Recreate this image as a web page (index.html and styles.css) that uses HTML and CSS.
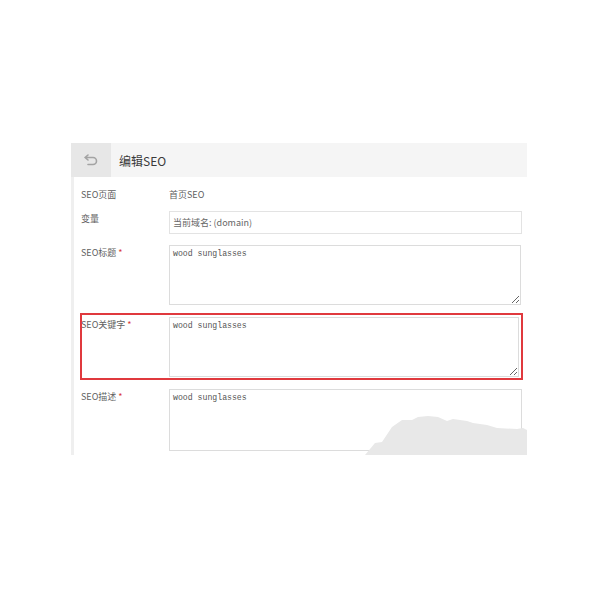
FILE: index.html
```html
<!DOCTYPE html>
<html lang="zh">
<head>
    <meta charset="UTF-8">
    <title>编辑SEO</title>
    <link rel="stylesheet" href="styles.css">
</head>
<body>
    <div class="panel">
        <div class="header">
            <div class="back">
                <svg width="16" height="12" viewBox="0 0 16 12"><path d="M5 1 L2 3.5 L5 6 M2 3.5 H10 A3.5 3.5 0 0 1 10 10.5 H5" fill="none" stroke="#a3a3a3" stroke-width="1.6" stroke-linecap="round" stroke-linejoin="round"/></svg>
            </div>
            <div class="title">编辑SEO</div>
        </div>

        <div class="content">
            <div class="row row-text">
                <div class="label">SEO页面</div>
                <div class="value">首页SEO</div>
            </div>

            <div class="row row-var">
                <div class="label">变量</div>
                <div class="input">当前域名: (domain)</div>
            </div>

            <div class="row row-title">
                <div class="label">SEO标题 <span class="req">*</span></div>
                <textarea class="area">wood sunglasses</textarea>
            </div>

            <div class="row row-keys">
                <div class="label">SEO关键字 <span class="req">*</span></div>
                <textarea class="area">wood sunglasses</textarea>
            </div>

            <div class="row row-desc">
                <div class="label">SEO描述 <span class="req">*</span></div>
                <textarea class="area">wood sunglasses</textarea>
            </div>
        </div>

        <!-- watermark blot over the corner -->
        <svg class="blot" width="165" height="42" viewBox="0 0 165 42"><polygon points="3,42 13,30 20,29 30,14 40,7 50,7 56,4 66,3 76,4 85,8 91,6 105,8 111,10 125,12 135,15 155,16 161,15 165,17 165,42" fill="#e8e8e8"/></svg>
    </div>
</body>
</html>
```

FILE: styles.css
```css
body {
    margin: 0;
    background: #fff;
    font-family: "Noto Sans CJK SC", "Noto Sans", sans-serif;
}
.panel {
    position: relative;
    width: 456px;
    height: 312px;
    margin: 143px 0 0 71px;
    overflow: hidden;
}
.header {
    display: flex;
    align-items: center;
    height: 34px;
    background: #f5f5f5;
}
.back {
    display: flex;
    align-items: center;
    justify-content: center;
    width: 40px;
    height: 34px;
    background: #e7e7e7;
}
.title {
    margin-left: 8px;
    font-size: 12px;
    color: #3a3a3a;
}
.content {
    height: 278px;
    border-left: 3px solid #efefef;
    padding: 0 5px 0 7px;
}
.row {
    display: flex;
    align-items: flex-start;
}
.label {
    width: 88px;
    flex: none;
    font-size: 9px;
    line-height: 14px;
    color: #5f5f5f;
}
.req {
    color: #d9393d;
}
.row-text {
    padding-top: 11px;
}
.row-text .value {
    font-size: 9px;
    line-height: 14px;
    color: #5f5f5f;
}
.row-var {
    margin-top: 9px;
}
.row-var .label {
    padding-top: 1px;
}
.input {
    box-sizing: border-box;
    width: 353px;
    height: 23px;
    border: 1px solid #e3e3e3;
    padding-left: 3px;
    font-size: 9px;
    line-height: 21px;
    color: #666;
}
.area {
    display: block;
    margin: 0;
    box-sizing: border-box;
    height: 60px;
    border: 1px solid #dcdcdc;
    padding: 3px;
    font-family: "Liberation Mono", monospace;
    font-size: 8.2px;
    line-height: 10px;
    color: #555;
    background: #fff;
    outline: none;
}
.row-title {
    margin-top: 11px;
}
.row-title .area {
    width: 352px;
}
.row-title .label,
.row-desc .label {
    padding-top: 1px;
}
.row-keys {
    margin: 8px -1px 0 -1px;
    border: 2px solid #e0393e;
    padding: 2px 2px 1px 0;
}
.row-keys .label {
    width: 88px;
    padding-top: 1px;
    margin-left: -1px;
}
.row-keys .area {
    width: 350px;
}
.row-desc {
    margin-top: 9px;
}
.row-desc .area {
    width: 353px;
    height: 62px;
}
.blot {
    position: absolute;
    left: 291px;
    top: 270px;
}
```
